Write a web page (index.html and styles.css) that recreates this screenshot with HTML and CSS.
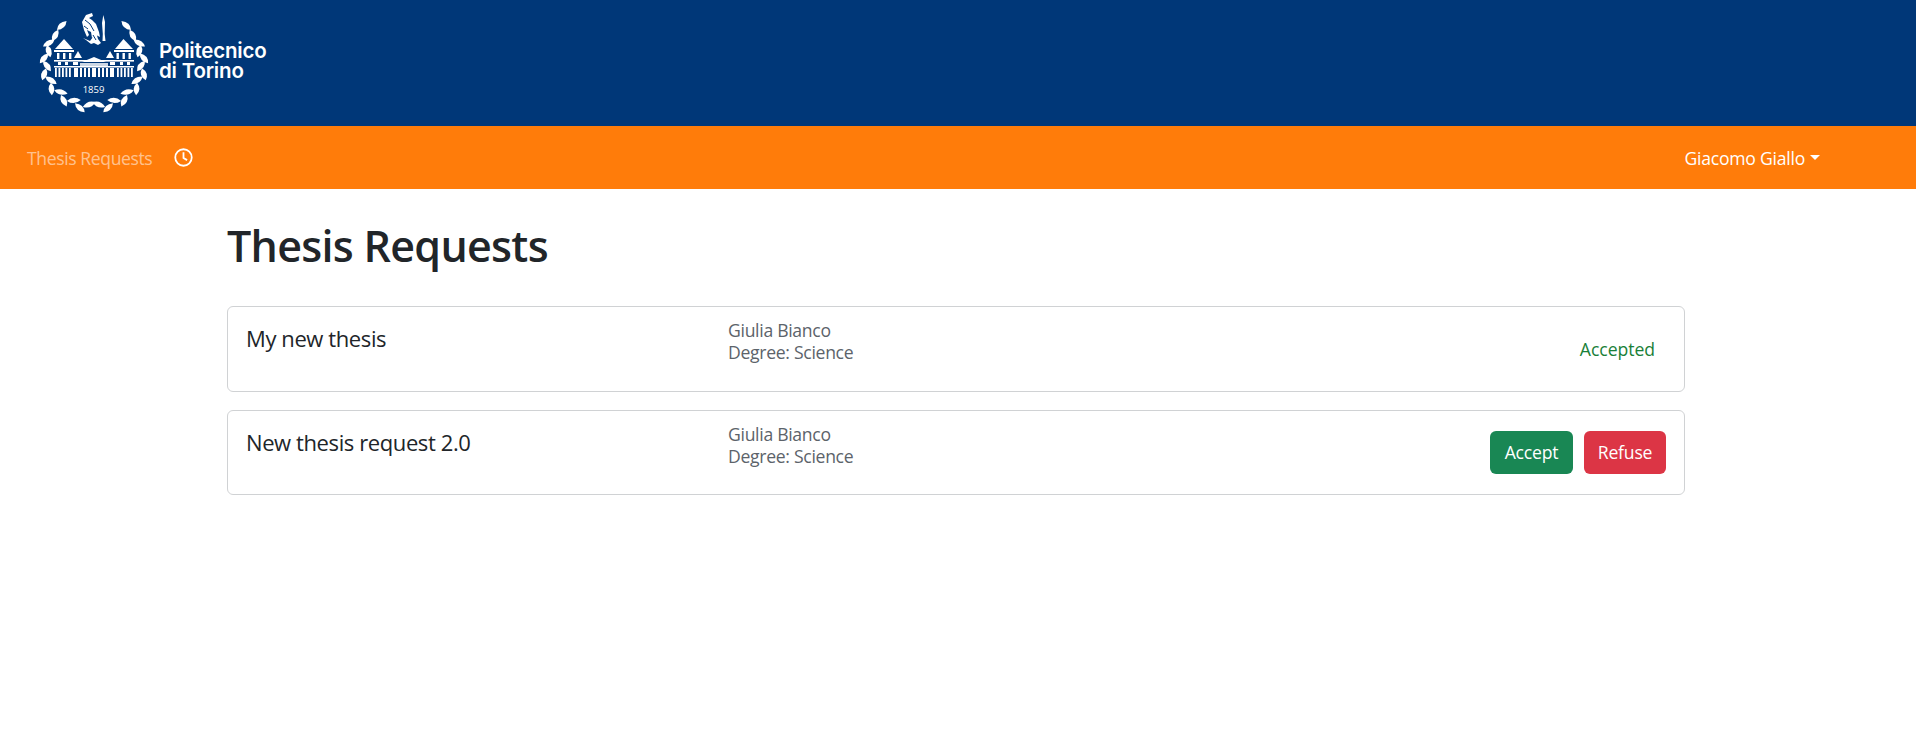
FILE: index.html
```html
<!DOCTYPE html>
<html lang="en">
<head>
<meta charset="utf-8">
<title>Thesis Requests</title>
<link rel="stylesheet" href="styles.css">
</head>
<body>
<header class="brand-bar">
  <svg class="logo" width="280" height="126" viewBox="0 0 280 126">
    <defs>
      <path id="leaf" d="M-6.500 0Q0-5.400 6.500 0Q0 5.400-6.500 0Z"/>
    </defs>
    <g fill="#fff">
      <g transform="translate(94 63) scale(1.07 .97)">
        <use href="#leaf" transform="rotate(186) translate(0 -43) rotate(-30)"/>
        <use href="#leaf" transform="rotate(196) translate(0 -48) rotate(30)"/>
        <use href="#leaf" transform="rotate(206) translate(0 -43) rotate(-30)"/>
        <use href="#leaf" transform="rotate(216) translate(0 -48) rotate(30)"/>
        <use href="#leaf" transform="rotate(226) translate(0 -43) rotate(-30)"/>
        <use href="#leaf" transform="rotate(236) translate(0 -48) rotate(30)"/>
        <use href="#leaf" transform="rotate(246) translate(0 -44) rotate(-30)"/>
        <use href="#leaf" transform="rotate(256) translate(0 -48) rotate(30)"/>
        <use href="#leaf" transform="rotate(266) translate(0 -44) rotate(-30)"/>
        <use href="#leaf" transform="rotate(276) translate(0 -47) rotate(30)"/>
        <use href="#leaf" transform="rotate(286) translate(0 -44) rotate(-30)"/>
        <use href="#leaf" transform="rotate(296) translate(0 -47) rotate(30)"/>
        <use href="#leaf" transform="rotate(308) translate(0 -46) rotate(-12)"/>
        <use href="#leaf" transform="rotate(322) translate(0 -49) rotate(-8)"/>
        <use href="#leaf" transform="rotate(174) translate(0 -43) rotate(30)"/>
        <use href="#leaf" transform="rotate(164) translate(0 -48) rotate(-30)"/>
        <use href="#leaf" transform="rotate(154) translate(0 -43) rotate(30)"/>
        <use href="#leaf" transform="rotate(144) translate(0 -48) rotate(-30)"/>
        <use href="#leaf" transform="rotate(134) translate(0 -43) rotate(30)"/>
        <use href="#leaf" transform="rotate(124) translate(0 -48) rotate(-30)"/>
        <use href="#leaf" transform="rotate(114) translate(0 -44) rotate(30)"/>
        <use href="#leaf" transform="rotate(104) translate(0 -48) rotate(-30)"/>
        <use href="#leaf" transform="rotate(94) translate(0 -44) rotate(30)"/>
        <use href="#leaf" transform="rotate(84) translate(0 -47) rotate(-30)"/>
        <use href="#leaf" transform="rotate(74) translate(0 -44) rotate(30)"/>
        <use href="#leaf" transform="rotate(64) translate(0 -47) rotate(-30)"/>
        <use href="#leaf" transform="rotate(52) translate(0 -46) rotate(12)"/>
        <use href="#leaf" transform="rotate(38) translate(0 -49) rotate(8)"/>
      </g>
      <!-- figure and sword -->
      <path d="M82 22L86 15L92 13L93 16L89 18L92 20L96 24L99 32L100 37L96 35L92 38L91 32L87 30L89 35L87 37L84 30Z"/>
      <path d="M92 30L96 32L98 39L101 43L98 45L94 43L91 44L86 40L83 38L90 41L93 37Z"/>
      <path class="logo-cut" d="M85 20L90 24L94 31M84 26L88 29M93 35L96 40"/>
      <path d="M103.300 15L105 22L104.700 34L105.500 41L102.500 41L102.800 34L102 23Z"/>
      <!-- towers -->
      <path d="M55 49L64 39L73 49Z"/>
      <path d="M115 49L123.500 39L133 49Z"/>
      <rect x="54" y="50" width="20" height="2"/>
      <rect x="114" y="50" width="20" height="2"/>
      <rect x="57" y="53" width="2.400" height="6"/><rect x="63" y="53" width="2.400" height="6"/><rect x="69" y="53" width="2.400" height="6"/>
      <rect x="116.500" y="53" width="2.400" height="6"/><rect x="122.500" y="53" width="2.400" height="6"/><rect x="128.500" y="53" width="2.400" height="6"/>
      <!-- pavilions and central roof -->
      <path d="M74 58L78 51L82 58Z"/>
      <path d="M106 58L110 51L114 58Z"/>
      <path d="M82 62L94 57L106 62Z"/>
      <rect x="54" y="60" width="80" height="1.600"/>
      <rect x="58" y="62" width="3" height="3"/><rect x="65" y="62" width="3" height="3"/><rect x="73" y="62" width="5" height="3"/>
      <rect x="110" y="62" width="5" height="3"/><rect x="120" y="62" width="3" height="3"/><rect x="127" y="62" width="3" height="3"/>
      <rect x="80" y="63" width="28" height="3.500" opacity=".8"/>
      <rect x="54" y="66" width="80" height="1.500"/>
      <rect x="55" y="68" width="1.800" height="9"/><rect x="58.500" y="68" width="1.800" height="9"/><rect x="62" y="68" width="1.800" height="9"/><rect x="65.500" y="68" width="1.800" height="9"/><rect x="69" y="68" width="1.800" height="9"/>
      <rect x="74" y="68" width="4" height="9"/><rect x="80" y="68" width="2" height="9"/><rect x="84" y="68" width="2" height="9"/><rect x="88" y="68" width="2" height="9"/><rect x="92" y="68" width="4" height="9"/><rect x="98" y="68" width="2" height="9"/><rect x="102" y="68" width="2" height="9"/><rect x="106" y="68" width="2" height="9"/><rect x="110" y="68" width="4" height="9"/>
      <rect x="117" y="68" width="1.800" height="9"/><rect x="120.500" y="68" width="1.800" height="9"/><rect x="124" y="68" width="1.800" height="9"/><rect x="127.500" y="68" width="1.800" height="9"/><rect x="131" y="68" width="1.800" height="9"/>
      <text class="logo-year" x="93.500" y="93" text-anchor="middle">1859</text>
      <text class="logo-name" x="159" y="58">Politecnico</text>
      <text class="logo-name" x="159" y="78">di Torino</text>
    </g>
  </svg>
</header>
<nav class="nav-bar">
  <div class="nav-left">
    <a class="nav-link" href="#">Thesis Requests</a>
    <svg class="clock" width="19" height="19" viewBox="0 0 18 18" fill="none" stroke="#fff">
      <circle cx="9" cy="9" r="7.8" stroke-width="1.7"/>
      <path d="M9 4v5.500l3.400 2" stroke-width="1.7"/>
    </svg>
  </div>
  <div class="user-menu">Giacomo Giallo<span class="caret"></span></div>
</nav>
<main class="content">
  <h1 class="page-title">Thesis Requests</h1>
  <ul class="request-list">
    <li class="request-card">
      <div class="request-title">My new thesis</div>
      <div class="request-info"><div>Giulia Bianco</div><div>Degree: Science</div></div>
      <div class="request-action"><span class="status-accepted">Accepted</span></div>
    </li>
    <li class="request-card">
      <div class="request-title">New thesis request 2.0</div>
      <div class="request-info"><div>Giulia Bianco</div><div>Degree: Science</div></div>
      <div class="request-action">
        <button class="btn btn-accept">Accept</button>
        <button class="btn btn-refuse">Refuse</button>
      </div>
    </li>
  </ul>
</main>
</body>
</html>
```
FILE: styles.css
```css
* { box-sizing: border-box; }
html, body { margin: 0; padding: 0; }
body {
  font-family: "Open Sans", "Noto Sans", "Liberation Sans", sans-serif;
  font-size: 17.6px;
  line-height: 22px;
  color: #212529;
  background: #fff;
}
.brand-bar {
  height: 126px;
  background: #003778;
}
.logo { display: block; }
.logo-cut { fill: none; stroke: #003778; stroke-width: 1; }
.logo-year { font: 500 9.5px "Open Sans", sans-serif; }
.logo-name { font: 600 20.5px "Inter", "Open Sans", sans-serif; letter-spacing: -.2px; }
.nav-bar {
  height: 63px;
  background: #ff7c0a;
  display: flex;
  align-items: center;
  justify-content: space-between;
  padding: 0 96px 0 27px;
  color: #fff;
}
.nav-left { display: flex; align-items: center; gap: 22px; }
.nav-link {
  color: rgba(255, 255, 255, .55);
  text-decoration: none;
  letter-spacing: -.4px;
}
.clock { display: block; }
.user-menu { letter-spacing: -.25px; display: flex; align-items: center; }
.caret {
  margin-left: 5px;
  width: 0;
  height: 0;
  border-top: 5px solid #fff;
  border-left: 5px solid transparent;
  border-right: 5px solid transparent;
}
.content { padding: 31px 231px 0 227px; }
.page-title {
  margin: 0 0 34px;
  font-size: 43px;
  font-weight: 600;
  line-height: 52px;
  letter-spacing: -.7px;
}
.request-list { list-style: none; margin: 0; padding: 0; display: flex; flex-direction: column; gap: 18px; }
.request-card {
  height: 85.5px;
  border: 1px solid #d0d2d4;
  border-radius: 6px;
  padding: 12px 18px;
  display: flex;
}
.request-title { width: 482px; font-size: 22px; line-height: 34px; letter-spacing: -.4px; padding-top: 2px; }
.request-info { color: #5c636a; letter-spacing: -.3px; }
.request-action { flex: 1; display: flex; align-items: center; justify-content: flex-end; gap: 11px; }
.status-accepted { color: #198038; letter-spacing: -.05px; margin-right: 11px; }
.btn {
  height: 43px;
  width: 83px;
  border: 0;
  border-radius: 6px;
  color: #fff;
  font: 17.6px "Open Sans", sans-serif;
  letter-spacing: -.2px;
  padding: 0;
}
.btn-accept { background: #198754; }
.btn-refuse { background: #dc3545; width: 82px; }
```
